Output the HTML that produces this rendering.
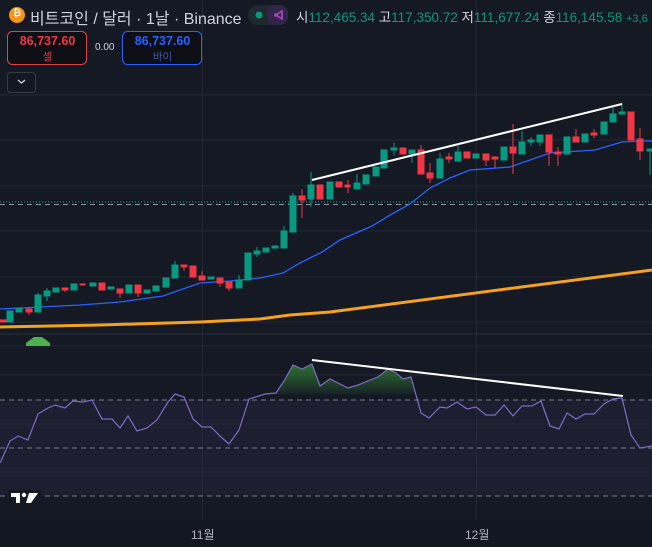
<!DOCTYPE html>
<html><head><meta charset="utf-8"><style>
body{margin:0;width:652px;height:547px;overflow:hidden;background:#151924;font-family:"Liberation Sans","Noto Sans CJK KR",sans-serif;position:relative}
.t{position:absolute;white-space:nowrap}
</style></head><body>
<svg width="652" height="547" style="position:absolute;left:0;top:0">
<rect width="652" height="547" fill="#151924"/>
<rect x="0" y="520" width="652" height="27" fill="#131722"/>
<rect x="0" y="400" width="652" height="96" fill="#7e57c2" opacity="0.09"/>
<g stroke="#242836" stroke-width="1">
<line x1="0" y1="95" x2="652" y2="95"/><line x1="0" y1="140" x2="652" y2="140"/><line x1="0" y1="186" x2="652" y2="186"/><line x1="0" y1="231" x2="652" y2="231"/><line x1="0" y1="277" x2="652" y2="277"/><line x1="0" y1="322" x2="652" y2="322"/>
<line x1="0" y1="346" x2="652" y2="346"/><line x1="0" y1="375" x2="652" y2="375"/><line x1="0" y1="424" x2="652" y2="424"/><line x1="0" y1="472" x2="652" y2="472"/>
<line x1="202.5" y1="0" x2="202.5" y2="520"/><line x1="476.5" y1="0" x2="476.5" y2="520"/>
</g>
<line x1="0" y1="334" x2="652" y2="334" stroke="#2a2e39"/>
<g stroke="#787b86" stroke-dasharray="5,4" stroke-width="1">
<line x1="0" y1="400" x2="652" y2="400"/><line x1="0" y1="448" x2="652" y2="448"/><line x1="0" y1="496" x2="652" y2="496"/>
<line x1="0" y1="204.5" x2="652" y2="204.5" stroke="#9598a1"/>
</g>
<line x1="0" y1="202" x2="652" y2="202" stroke="#22ab94" stroke-dasharray="1,2"/>
<polyline fill="none" stroke="#f7a21b" stroke-width="3" points="0,327 100,325 200,322 260,319 290,315 330,312 652,270"/>
<polyline fill="none" stroke="#2962ff" stroke-width="1.3" points="0,309 40,307 80,305 120,302 163,296 200,283 230,281 260,278 283,273 300,263 322,252 340,240 372,226 392,214 410,204 430,188 450,178 470,170 510,167 550,153 595,150 622,142 640,141 652,141"/>
<g stroke-width="1">
<g fill="#089981" stroke="#089981">
<rect x="7" y="311" width="6" height="11"/><rect x="16" y="308" width="6" height="4"/><rect x="35" y="295" width="6" height="17"/><line x1="38" y1="293" x2="38" y2="295"/><rect x="44" y="291" width="6" height="5"/><line x1="47" y1="288" x2="47" y2="301"/><rect x="53" y="288" width="6" height="4"/><rect x="71" y="284" width="6" height="6"/><rect x="90" y="283" width="6" height="3"/><rect x="108" y="287" width="6" height="2"/><rect x="126" y="285" width="6" height="8"/><rect x="144" y="290" width="6" height="3"/><rect x="153" y="286" width="6" height="5"/><rect x="163" y="278" width="6" height="9"/><rect x="172" y="265" width="6" height="13"/><line x1="175" y1="261" x2="175" y2="265"/><rect x="208" y="277" width="6" height="2"/><rect x="236" y="280" width="6" height="8"/><line x1="239" y1="275" x2="239" y2="280"/><rect x="245" y="253" width="6" height="27"/><rect x="254" y="251" width="6" height="3"/><line x1="257" y1="247" x2="257" y2="257"/><rect x="263" y="248" width="6" height="4"/><rect x="272" y="246" width="6" height="2"/><rect x="281" y="231" width="6" height="17"/><line x1="284" y1="226" x2="284" y2="231"/><rect x="290" y="196" width="6" height="36"/><line x1="293" y1="193" x2="293" y2="196"/><rect x="308" y="185" width="6" height="14"/><line x1="311" y1="172" x2="311" y2="207"/><rect x="327" y="182" width="6" height="17"/><rect x="354" y="183" width="6" height="6"/><line x1="357" y1="174" x2="357" y2="183"/><rect x="363" y="175" width="6" height="9"/><rect x="373" y="167" width="6" height="9"/><rect x="381" y="150" width="6" height="18"/><rect x="391" y="148" width="6" height="2"/><line x1="394" y1="143" x2="394" y2="155"/><rect x="409" y="150" width="6" height="4"/><line x1="412" y1="150" x2="412" y2="163"/><rect x="437" y="159" width="6" height="19"/><line x1="440" y1="153" x2="440" y2="159"/><rect x="455" y="152" width="6" height="9"/><line x1="458" y1="146" x2="458" y2="152"/><rect x="473" y="154" width="6" height="4"/><rect x="501" y="147" width="6" height="13"/><rect x="519" y="142" width="6" height="12"/><line x1="522" y1="131" x2="522" y2="142"/><rect x="528" y="140" width="6" height="2"/><line x1="531" y1="137" x2="531" y2="146"/><rect x="537" y="135" width="6" height="7"/><line x1="540" y1="135" x2="540" y2="146"/><rect x="564" y="137" width="6" height="17"/><rect x="582" y="134" width="6" height="8"/><rect x="601" y="122" width="6" height="12"/><rect x="610" y="114" width="6" height="8"/><line x1="613" y1="107" x2="613" y2="122"/><rect x="619" y="112" width="6" height="2"/><line x1="622" y1="103" x2="622" y2="114"/><rect x="647" y="149" width="6" height="2"/><line x1="650" y1="149" x2="650" y2="175"/>
</g>
<g fill="#f23645" stroke="#f23645">
<rect x="0" y="320" width="6" height="2"/><rect x="26" y="309" width="6" height="3"/><line x1="29" y1="307" x2="29" y2="315"/><rect x="62" y="288" width="6" height="2"/><line x1="65" y1="288" x2="65" y2="292"/><rect x="80" y="284" width="5" height="1"/><rect x="99" y="283" width="6" height="7"/><rect x="117" y="289" width="6" height="4"/><line x1="120" y1="289" x2="120" y2="298"/><rect x="135" y="285" width="6" height="8"/><line x1="138" y1="293" x2="138" y2="297"/><rect x="181" y="265" width="6" height="2"/><line x1="184" y1="265" x2="184" y2="271"/><rect x="190" y="266" width="6" height="11"/><rect x="199" y="276" width="6" height="4"/><line x1="202" y1="271" x2="202" y2="276"/><rect x="217" y="278" width="6" height="5"/><line x1="220" y1="278" x2="220" y2="287"/><rect x="226" y="282" width="6" height="6"/><line x1="229" y1="288" x2="229" y2="291"/><rect x="299" y="196" width="6" height="4"/><line x1="302" y1="189" x2="302" y2="218"/><rect x="317" y="185" width="6" height="14"/><rect x="336" y="182" width="6" height="5"/><rect x="345" y="185" width="5" height="2"/><line x1="348" y1="180" x2="348" y2="193"/><rect x="400" y="148" width="6" height="6"/><rect x="418" y="150" width="6" height="24"/><line x1="421" y1="145" x2="421" y2="150"/><rect x="427" y="173" width="6" height="5"/><line x1="430" y1="163" x2="430" y2="183"/><rect x="446" y="157" width="6" height="2"/><line x1="449" y1="153" x2="449" y2="163"/><rect x="464" y="152" width="6" height="6"/><rect x="483" y="154" width="6" height="6"/><line x1="486" y1="160" x2="486" y2="166"/><rect x="492" y="157" width="6" height="2"/><line x1="495" y1="156" x2="495" y2="168"/><rect x="510" y="147" width="6" height="6"/><line x1="513" y1="124" x2="513" y2="174"/><rect x="546" y="135" width="6" height="17"/><line x1="549" y1="152" x2="549" y2="166"/><rect x="555" y="152" width="6" height="2"/><line x1="558" y1="147" x2="558" y2="166"/><rect x="573" y="137" width="6" height="5"/><line x1="576" y1="129" x2="576" y2="137"/><rect x="591" y="133" width="6" height="2"/><line x1="594" y1="129" x2="594" y2="138"/><rect x="628" y="112" width="6" height="28"/><rect x="637" y="139" width="6" height="12"/><line x1="640" y1="128" x2="640" y2="160"/>
</g></g>
<line x1="312" y1="180" x2="622" y2="104" stroke="#fff" stroke-width="2"/>
<polygon points="26,346 50,346 50,343 42,337 34,337 26,343" fill="#4caf50"/>
<defs><clipPath id="c"><rect x="0" y="340" width="652" height="54"/></clipPath>
<linearGradient id="g" x1="0" y1="0" x2="0" y2="1"><stop offset="0" stop-color="#2e7d32" stop-opacity="0.9"/><stop offset="1" stop-color="#2e7d32" stop-opacity="0.1"/></linearGradient></defs>
<polygon clip-path="url(#c)" fill="url(#g)" points="276,394 284,381 293,365 302,369 312,364 320,386 330,379 348,388 358,385 370,380 378,377 388,369 396,373 403,379 411,377 416,394"/>
<polyline fill="none" stroke="#7e6bc4" stroke-width="1.2" points="0,463 10,441 18,436 28,440 38,414 48,408 55,405 65,408 73,401 83,402 92,400 102,419 112,419 120,428 128,416 137,431 147,428 157,420 168,402 175,394 184,397 193,419 202,427 211,427 221,437 229,444 239,430 249,399 265,394 276,393 284,381 293,365 302,369 312,364 320,386 330,379 348,388 358,385 370,380 378,377 388,369 396,373 403,379 411,377 421,413 429,418 440,407 447,408 457,402 467,409 476,407 486,415 495,415 504,405 513,416 522,406 532,406 541,401 550,426 559,429 567,413 576,419 585,414 594,414 604,404 613,399 622,398 631,435 640,448 652,446"/>
<line x1="312" y1="360" x2="623" y2="396" stroke="#fff" stroke-width="2"/>
<rect x="8" y="490" width="33" height="16" fill="#151924"/>
<path d="M11 493h9v10h-4v-6h-5z" fill="#fff"/><circle cx="24" cy="495" r="2.2" fill="#fff"/><path d="M29 493h9l-7 10h-5z" fill="#fff"/>
<circle cx="17" cy="15" r="8" fill="#f7931a"/>
<rect x="248" y="5" width="40" height="20" rx="10" fill="#1e2a2c"/>
<rect x="267" y="5" width="21" height="20" rx="8" fill="#33244a"/>
<circle cx="259" cy="15" r="3.5" fill="#089981"/>
<path d="M276 15l6-4v8z" fill="none" stroke="#ab47bc" stroke-width="1.6"/><circle cx="276" cy="15" r="1.8" fill="#ab47bc"/>
<rect x="7.5" y="31.5" width="79" height="33" rx="5" fill="#0e0f14" stroke="#e04350"/>
<rect x="122.5" y="31.5" width="79" height="33" rx="5" fill="#0e0f14" stroke="#2962ff"/>
<rect x="7.5" y="72.5" width="28" height="20" rx="3" fill="#131722" stroke="#363a45"/>
<path d="M18 80l3.5 3 3.5-3" fill="none" stroke="#d1d4dc" stroke-width="1.3"/>
</svg>
<div class="t" style="left:13px;top:8px;color:#fff;font-size:10px;font-weight:bold">₿</div>
<div class="t" style="left:30px;top:5px;color:#d1d4dc;font-size:16px">비트코인 / 달러 · 1날 · Binance</div>
<div class="t" style="left:296px;top:6px;color:#d1d4dc;font-size:13.5px">시<span style="color:#089981">112,465.34</span> 고<span style="color:#089981">117,350.72</span> 저<span style="color:#089981">111,677.24</span> 종<span style="color:#089981">116,145.58</span> <span style="color:#089981;font-size:11px">+3,6</span></div>
<div class="t" style="left:8px;top:34px;width:79px;text-align:center;color:#f23645;font-size:12.5px;font-weight:bold">86,737.60</div>
<div class="t" style="left:8px;top:49px;width:79px;text-align:center;color:#f23645;font-size:10.5px">셀</div>
<div class="t" style="left:95px;top:42px;color:#d1d4dc;font-size:10px">0.00</div>
<div class="t" style="left:123px;top:34px;width:79px;text-align:center;color:#2962ff;font-size:12.5px;font-weight:bold">86,737.60</div>
<div class="t" style="left:123px;top:49px;width:79px;text-align:center;color:#3d5ab8;font-size:10.5px">바이</div>
<div class="t" style="left:191px;top:526px;color:#b2b5be;font-size:12px">11월</div>
<div class="t" style="left:465px;top:526px;color:#b2b5be;font-size:12px">12월</div>
</body></html>
